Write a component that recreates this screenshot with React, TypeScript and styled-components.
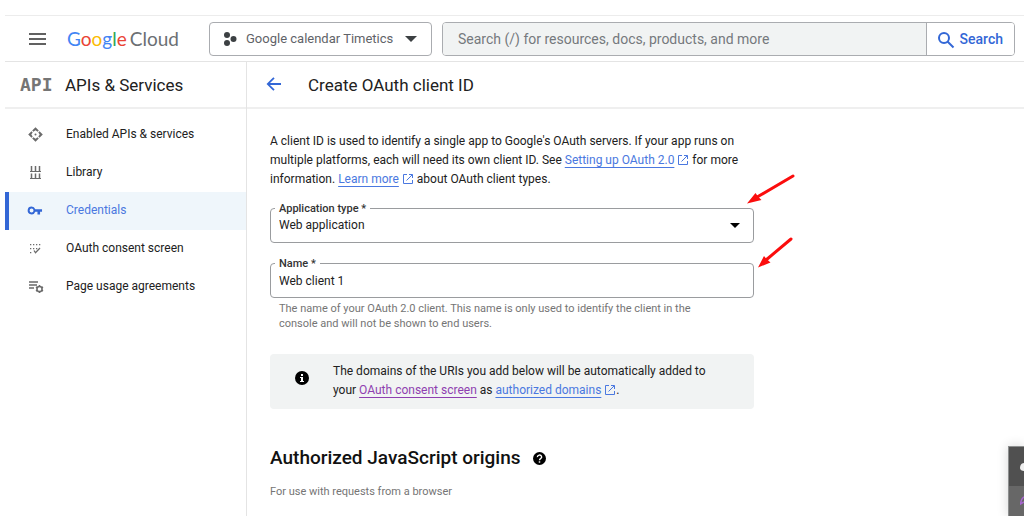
import React from 'react';
import styled, { createGlobalStyle } from 'styled-components';

const blue = '#3367d6';
const line = '#e4e4e4';

const GlobalStyle = createGlobalStyle`
  * { box-sizing: border-box; }
  body {
    margin: 0;
    background: #fff;
    color: #212121;
    font-family: Roboto, "Liberation Sans", sans-serif;
    font-size: 12px;
    line-height: 19px;
  }
  button, input, select { font: inherit; color: inherit; margin: 0; }
`;

const Page = styled.div`
  position: relative;
  display: flex;
  flex-direction: column;
  height: 100vh;
  overflow: hidden;
  padding: 15px 0 0 5px;
`;

const TopBar = styled.header`
  display: flex;
  align-items: center;
  flex: none;
  height: 47px;
  padding: 0 9px 0 20px;
  border-top: 1px solid #ececec;
  border-bottom: 1px solid ${line};
`;

const IconButton = styled.button`
  display: flex;
  padding: 0;
  border: 0;
  background: none;
  cursor: pointer;
`;

const Logo = styled.a`
  display: flex;
  gap: 3px;
  width: 124px;
  margin: 0 0 0 18px;
  font-family: Lato, Roboto, sans-serif;
  font-size: 19px;
  line-height: 24px;
  color: #6b6f73;
  text-decoration: none;
  white-space: nowrap;
`;

const Tint = styled.span<{ $color: string }>`
  color: ${(p) => p.$color};
`;

const ProjectPicker = styled.button`
  display: flex;
  align-items: center;
  gap: 8px;
  flex: none;
  width: 223px;
  height: 34px;
  margin: 0 10px 0 18px;
  padding: 0 14px 0 12px;
  border: 1px solid #aaacb0;
  border-radius: 4px;
  background: #fff;
  color: #5f6368;
  font-size: 13px;
  white-space: nowrap;
  cursor: pointer;
`;

const PickerName = styled.span`
  flex: 1;
  text-align: left;
`;

const SearchBar = styled.form`
  display: flex;
  flex: 1;
  min-width: 0;
  height: 34px;
  border: 1px solid #aaacb0;
  border-radius: 4px;
  overflow: hidden;
`;

const SearchInput = styled.input`
  flex: 1;
  min-width: 0;
  padding: 2px 15px 0;
  border: 0;
  background: #f1f3f3;
  font-size: 14px;
  outline: none;
  &::placeholder { color: #75797d; opacity: 1; }
`;

const SearchButton = styled.button`
  display: flex;
  align-items: center;
  gap: 5px;
  flex: none;
  padding: 2px 11px 0 10px;
  border: 0;
  border-left: 1px solid #aaacb0;
  background: #fff;
  color: ${blue};
  font-size: 14px;
  font-weight: 500;
  cursor: pointer;
`;

const Body = styled.div`
  display: flex;
  flex: 1;
  min-height: 0;
`;

const Sidebar = styled.aside`
  flex: none;
  width: 242px;
  border-right: 1px solid ${line};
`;

const ColumnHead = styled.div<{ $gap: number; $pad: number }>`
  display: flex;
  align-items: center;
  gap: ${(p) => p.$gap}px;
  height: 47px;
  padding: 0 ${(p) => p.$pad}px;
  border-bottom: 2px solid #efefef;
`;

const ApiMark = styled.span`
  width: 33px;
  color: #757575;
  font-family: "DejaVu Sans Mono", monospace;
  font-size: 18px;
  font-weight: 700;
`;

const Title = styled.h1`
  margin: 0;
  font-size: 17px;
  font-weight: 400;
  line-height: 24px;
  white-space: nowrap;
`;

const Nav = styled.nav`
  padding: 7px 0;
`;

const NavItem = styled.a<{ $active?: boolean }>`
  display: flex;
  align-items: center;
  gap: 22px;
  height: 38px;
  padding: 0 0 1px 18px;
  border-left: 4px solid ${(p) => (p.$active ? blue : 'transparent')};
  background: ${(p) => (p.$active ? '#eff6fb' : 'none')};
  color: ${(p) => (p.$active ? '#4a78e0' : 'inherit')};
  text-decoration: none;

  svg { color: ${(p) => (p.$active ? blue : '#6b6b6b')}; }
`;

const Main = styled.main`
  flex: 1;
  min-width: 0;
`;

const Content = styled.div`
  max-width: 507px;
  padding: 23px 0 0 23px;
`;

const Para = styled.p`
  margin: 0;
`;

const Link = styled.a<{ $visited?: boolean }>`
  color: ${(p) => (p.$visited ? '#8e3fb0' : '#4a78e0')};
  text-decoration: underline 1px;
  text-underline-offset: 3px;
  text-decoration-skip-ink: none;
`;

const ExternalMark = styled.svg`
  width: 10px;
  height: 10px;
  margin: 0 1px 0 4px;
  vertical-align: -1px;
`;

const Field = styled.div`
  position: relative;
  display: flex;
  align-items: center;
  margin-top: 20px;

  p + & { margin-top: 19px; }
`;

const FieldLabel = styled.label`
  position: absolute;
  top: -7px;
  left: 5px;
  padding: 0 4px;
  background: #fff;
  color: #333;
  font-size: 11px;
  line-height: 16px;
  font-weight: 500;
`;

const boxed = `
  width: 100%;
  height: 35px;
  padding: 0 8px;
  border: 1px solid #9a9c9f;
  border-radius: 4px;
  background: #fff;
  outline: none;
`;

const TextInput = styled.input`${boxed}`;
const Select = styled.select`
  ${boxed}
  appearance: none;
`;

const Caret = styled.svg`
  position: absolute;
  right: 14px;
  width: 10px;
  height: 5px;
  pointer-events: none;
`;

const Hint = styled.p`
  margin: 0;
  padding: 3px 32px 0 9px;
  color: #757575;
  font-size: 11px;
  line-height: 15px;
`;

const Notice = styled.div`
  display: flex;
  align-items: center;
  gap: 24px;
  margin-top: 23px;
  padding: 8px 24px 9px 25px;
  border-radius: 4px;
  background: #f1f3f3;
`;

const InfoMark = styled.svg`
  flex: none;
  width: 14px;
  height: 14px;
  margin-bottom: 6px;
`;

const SectionHead = styled.div`
  display: flex;
  align-items: center;
  gap: 12px;
  margin-top: 37px;
`;

const SectionTitle = styled.h2`
  margin: 0;
  color: #111;
  font-size: 19px;
  font-weight: 500;
  line-height: 24px;
`;

const SectionNote = styled.p`
  margin: 12px 0 0;
  color: #757575;
  font-size: 11px;
`;

const Annotations = styled.svg`
  position: absolute;
  top: 170px;
  left: 740px;
  pointer-events: none;
`;

const Dock = styled.div`
  position: absolute;
  right: 0;
  bottom: 0;
  width: 16px;
  border: 1px solid #8d8f8f;
  border-width: 1px 0 0 1px;
  box-shadow: 0 0 12px rgba(0, 0, 0, 0.16);
`;

const DockCell = styled.div<{ $shade: string; $h: number }>`
  display: flex;
  align-items: center;
  justify-content: flex-end;
  height: ${(p) => p.$h}px;
  background: ${(p) => p.$shade};
`;

const External = () => (
  <ExternalMark viewBox="0 0 10 10" fill="none" stroke="#4a78e0" aria-hidden="true">
    <path d="M4 .5H.5v9h9V6M6 .5h3.5V4M9.300 .7L3.500 6.500" />
  </ExternalMark>
);

const icons = {
  enabled: (
    <svg width="17" height="17" viewBox="0 0 17 17" fill="currentColor" aria-hidden="true">
      <path d="M8.500 1.200L11.800 4.500 10.600 5.700 8.500 4.300 6.400 5.700 5.200 4.500zM8.500 15.800l3.300-3.300-1.200-1.200-2.100 1.400-2.100-1.400-1.200 1.200zM1.200 8.500l3.300-3.300 1.200 1.200-1.400 2.100 1.400 2.100-1.200 1.200zM15.800 8.500l-3.300-3.300-1.200 1.200 1.400 2.100-1.400 2.100 1.200 1.200z" />
      <circle cx="8.500" cy="8.500" r="1" />
    </svg>
  ),
  library: (
    <svg width="17" height="17" viewBox="0 0 17 17" fill="none" stroke="currentColor" aria-hidden="true">
      <path d="M3 7.500h11M3 14.500h11" />
      <path d="M4.500 2v5M8.500 2v5M12.500 2v5M4.500 9.500v5M8.500 9.500v5M12.500 9.500v5" strokeWidth="1.500" />
    </svg>
  ),
  key: (
    <svg width="17" height="17" viewBox="0 0 26 24" fill="currentColor" aria-hidden="true">
      <path d="M12.650 10A6 6 0 0 0 7 6a6 6 0 1 0 5.650 8H16v4h4v-4h3v-4zM7 15a3 3 0 1 1 0-6 3 3 0 0 1 0 6z" />
    </svg>
  ),
  consent: (
    <svg width="17" height="17" viewBox="0 0 17 17" fill="currentColor" aria-hidden="true">
      <path d="M3 4h1.300v1.300H3zM6 4h1.300v1.300H6zM9 4h1.300v1.300H9zM12 4h1.300v1.300H12zM3 8h1.300v1.300H3zM6 8h1.300v1.300H6zM9 8h1.300v1.300H9zM3 12h1.300v1.300H3z" />
      <path d="M7 10.500l1.500 2.300L13 8" fill="none" stroke="currentColor" strokeWidth="1.300" />
    </svg>
  ),
  agreements: (
    <svg width="17" height="17" viewBox="0 0 17 17" fill="none" stroke="currentColor" aria-hidden="true">
      <path d="M2 4h9M2 7h8M2 10h5" strokeWidth="1.500" />
      <circle cx="12.500" cy="11" r="2.600" strokeWidth="1.500" />
      <path d="M12.500 7v1.500M12.500 13.500V15M9 9l1.400.8M14.600 12.200l1.400.8M9 13l1.400-.8M14.600 9.800L16 9" strokeWidth="1.500" />
    </svg>
  ),
};

const navItems = [
  { label: 'Enabled APIs & services', icon: icons.enabled },
  { label: 'Library', icon: icons.library },
  { label: 'Credentials', icon: icons.key, active: true },
  { label: 'OAuth consent screen', icon: icons.consent },
  { label: 'Page usage agreements', icon: icons.agreements },
];

const logoLetters: [string, string][] = [
  ['G', '#4285f4'], ['o', '#ea4335'], ['o', '#fbbc04'],
  ['g', '#4285f4'], ['l', '#34a853'], ['e', '#ea4335'],
];

export default function App() {
  return (
    <>
      <GlobalStyle />
      <Page>
        <TopBar>
          <IconButton aria-label="Navigation menu">
            <svg width="24" height="18" viewBox="0 0 24 18" fill="none" stroke="#616161" strokeWidth="2" aria-hidden="true">
              <path d="M4 4h17M4 9h17M4 14h17" />
            </svg>
          </IconButton>
          <Logo href="#">
            <span>
              {logoLetters.map(([letter, color], i) => (
                <Tint key={i} $color={color}>{letter}</Tint>
              ))}
            </span>
            <span>Cloud</span>
          </Logo>
          <ProjectPicker type="button">
            <svg width="16" height="16" viewBox="0 0 16 16" fill="#3c4043" aria-hidden="true">
              <circle cx="5" cy="4" r="3" />
              <circle cx="11.500" cy="8" r="3" />
              <circle cx="5" cy="12" r="3" />
            </svg>
            <PickerName>Google calendar Timetics</PickerName>
            <svg width="12" height="6" viewBox="0 0 12 6" fill="#3c4043" aria-hidden="true">
              <path d="M0 0h12L6 6z" />
            </svg>
          </ProjectPicker>
          <SearchBar onSubmit={(e) => e.preventDefault()}>
            <SearchInput
              aria-label="Search"
              placeholder="Search (/) for resources, docs, products, and more"
            />
            <SearchButton type="submit">
              <svg width="18" height="18" viewBox="0 0 18 18" fill="none" stroke={blue} strokeWidth="2" aria-hidden="true">
                <circle cx="7" cy="7" r="5" />
                <path d="M10.500 10.500L16.500 16.500" />
              </svg>
              Search
            </SearchButton>
          </SearchBar>
        </TopBar>

        <Body>
          <Sidebar>
            <ColumnHead $gap={12} $pad={15}>
              <ApiMark>API</ApiMark>
              <Title as="h2">APIs &amp; Services</Title>
            </ColumnHead>
            <Nav>
              {navItems.map((item) => (
                <NavItem key={item.label} href="#" $active={item.active}>
                  {item.icon}
                  {item.label}
                </NavItem>
              ))}
            </Nav>
          </Sidebar>

          <Main>
            <ColumnHead $gap={26} $pad={19}>
              <IconButton aria-label="Back">
                <svg width="16" height="16" viewBox="0 0 16 16" fill="none" stroke={blue} strokeWidth="1.800" aria-hidden="true">
                  <path d="M15 7H2M8 .8L1.800 7 8 13.200" />
                </svg>
              </IconButton>
              <Title>Create OAuth client ID</Title>
            </ColumnHead>

            <Content>
              <Para>
                A client ID is used to identify a single app to Google's OAuth servers. If your app
                runs on multiple platforms, each will need its own client ID. See{' '}
                <Link href="#">Setting up OAuth 2.0</Link><External /> for more information.{' '}
                <Link href="#">Learn more</Link><External /> about OAuth client types.
              </Para>

              <Field>
                <Select id="app-type" defaultValue="web">
                  <option value="web">Web application</option>
                </Select>
                <FieldLabel htmlFor="app-type">Application type *</FieldLabel>
                <Caret viewBox="0 0 10 5" aria-hidden="true">
                  <path d="M0 0h10L5 5z" />
                </Caret>
              </Field>

              <Field>
                <TextInput id="client-name" defaultValue="Web client 1" />
                <FieldLabel htmlFor="client-name">Name *</FieldLabel>
              </Field>
              <Hint>
                The name of your OAuth 2.0 client. This name is only used to identify the client in
                the console and will not be shown to end users.
              </Hint>

              <Notice>
                <InfoMark viewBox="0 0 14 14" aria-hidden="true">
                  <circle cx="7" cy="7" r="7" />
                  <path d="M6 3h2v2H6zM5 6h3v4h1v1H5v-1h1V7H5z" fill="#fff" />
                </InfoMark>
                <Para>
                  The domains of the URIs you add below will be automatically added to your{' '}
                  <Link href="#" $visited>OAuth consent screen</Link> as{' '}
                  <Link href="#">authorized domains</Link><External />.
                </Para>
              </Notice>

              <SectionHead>
                <SectionTitle>Authorized JavaScript origins</SectionTitle>
                <IconButton aria-label="Help">
                  <svg width="13" height="13" viewBox="0 0 14 14" aria-hidden="true">
                    <circle cx="7" cy="7" r="7" />
                    <path d="M4.700 5.500a2.300 2.100 0 1 1 3.500 1.700c-.8.500-1.200.8-1.200 1.700" fill="none" stroke="#fff" strokeWidth="1.500" />
                    <path d="M6.200 10h1.600v1.500H6.200z" fill="#fff" />
                  </svg>
                </IconButton>
              </SectionHead>
              <SectionNote>For use with requests from a browser</SectionNote>
            </Content>
          </Main>
        </Body>

        <Annotations width="60" height="100" viewBox="0 0 60 100" fill="#fb0d0d" aria-hidden="true">
          <path d="M53 6L18 26.500M51 69L26 90" fill="none" stroke="#fb0d0d" strokeWidth="3" strokeLinecap="round" />
          <path d="M7 33.500L15.500 23l2.500 3.500 3.500 3.500zM18 97.500L24 86l2.500 3 4 3.500z" />
        </Annotations>

        <Dock>
          <DockCell $shade="#505050" $h={39}>
            <svg width="4" height="8" viewBox="0 0 4 8" aria-hidden="true">
              <path d="M4 0C1 0 0 3 0 5c0 2 2 3 4 3z" fill="#eee" />
            </svg>
          </DockCell>
          <DockCell $shade="#676767" $h={30}>
            <svg width="4" height="10" viewBox="0 0 4 10" aria-hidden="true">
              <path d="M4 1C2 2 1 5 .5 8L4 6" fill="none" stroke="#a765cf" strokeWidth="1.500" />
            </svg>
          </DockCell>
        </Dock>
      </Page>
    </>
  );
}
